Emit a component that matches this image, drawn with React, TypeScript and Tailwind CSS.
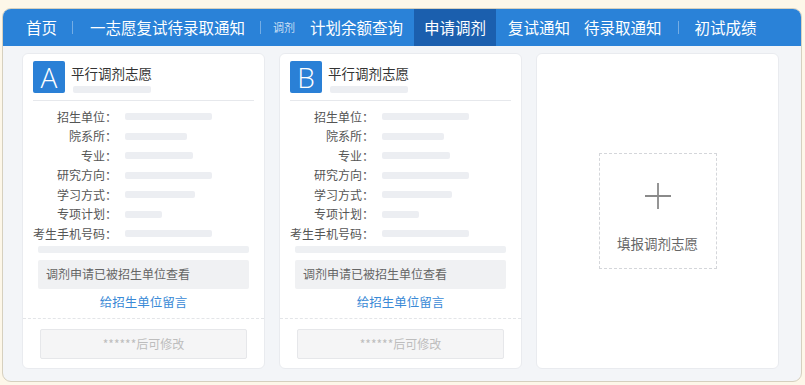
import React from "react";

const font = { fontFamily: '"Noto Sans CJK SC", "Noto Sans", sans-serif' };

function Sep() {
  return <div className="w-px h-[13px] bg-white/35" />;
}

function Bar({ w }: { w: number }) {
  return <div className="h-[7px] rounded-[2px] bg-[#eceef2]" style={{ width: w }} />;
}

const rows: [string, number][] = [
  ["招生单位：", 87],
  ["院系所：", 62],
  ["专业：", 68],
  ["研究方向：", 87],
  ["学习方式：", 70],
  ["专项计划：", 37],
  ["考生手机号码：", 87],
];

function WishCard({ letter }: { letter: string }) {
  return (
    <div className="w-[243px] rounded-[6px] bg-white border border-[#e9ebef] flex flex-col">
      <div className="px-[10px] pt-[7px]">
        <div className="flex">
          <div className="w-[32px] h-[32px] bg-[#2a80d6] rounded-[2px] flex items-center justify-center text-white text-[28px] leading-none font-light" style={{ fontFamily: '"Open Sans", "Noto Sans", sans-serif' }}>
            {letter}
          </div>
          <div className="ml-[6px] pt-[2px] flex flex-col">
            <div className="text-[13.5px] leading-[20px] text-[#333]">平行调剂志愿</div>
            <div className="mt-[3px] ml-[2px]">
              <Bar w={78} />
            </div>
          </div>
        </div>
        <div className="mt-[7px] h-px bg-[#e6e8ec]" />
        <div className="mt-[6px] flex flex-col">
          {rows.map(([label, w]) => (
            <div key={label} className="flex items-center h-[19.5px]">
              <div className="w-[84px] text-right text-[12px] text-[#555] leading-none whitespace-nowrap">{label}</div>
              <div className="ml-[8px]">
                <Bar w={w} />
              </div>
            </div>
          ))}
        </div>
      </div>
      <div className="mx-[15px] mt-[2px] h-[7px] rounded-[2px] bg-[#eef0f3]" />
      <div className="mx-[15px] mt-[7px] h-[29px] rounded-[2px] bg-[#f0f1f3] flex items-center pl-[8px] text-[12px] text-[#666]">
        调剂申请已被招生单位查看
      </div>
      <div className="mt-[4px] h-[20px] flex items-center justify-center text-[12.5px] text-[#3a8ad6]">给招生单位留言</div>
      <div className="mt-[5px] border-t border-dashed border-[#e3e5e8]" />
      <div className="mx-[17px] mt-[10px] h-[30px] rounded-[2px] bg-[#f5f5f6] border border-[#e6e7ea] flex items-center justify-center text-[12px] text-[#bdbdbd]">
        ******后可修改
      </div>
      <div className="h-[9px]" />
    </div>
  );
}

export default function App() {
  return (
    <div className="w-[805px] h-[385px] bg-[#fdf7e9] pt-[8px] px-[2px]" style={font}>
      <div className="w-[800px] h-[374px] rounded-[9px] border border-[#d6d0bf] overflow-hidden bg-[#f3f5f8] flex flex-col">
        <div className="h-[37px] bg-[#2a82d8] flex items-center text-white text-[15.5px] pl-[23px] shrink-0">
          <span>首页</span>
          <div className="ml-[15px] mr-[17px]"><Sep /></div>
          <span>一志愿复试待录取通知</span>
          <div className="mx-[15px]"><Sep /></div>
          <span className="text-[11px] text-white/75 mr-[15px] ml-[-3px]">调剂</span>
          <span>计划余额查询</span>
          <div className="ml-[11px] h-full px-[10px] bg-[#1b5fae] flex items-center">申请调剂</div>
          <span className="ml-[12px]">复试通知</span>
          <span className="ml-[14px]">待录取通知</span>
          <div className="mx-[16px]"><Sep /></div>
          <span>初试成绩</span>
        </div>
        <div className="flex gap-[14px] pl-[19px] pt-[7px]">
          <WishCard letter="A" />
          <WishCard letter="B" />
          <div className="w-[243px] rounded-[6px] bg-white border border-[#e9ebef] flex items-center justify-center">
            <div className="w-[118px] h-[116px] border border-dashed border-[#d4d6da] flex flex-col items-center">
              <svg className="mt-[29px]" width="26" height="26" viewBox="0 0 26 26">
                <path d="M13 0V26M0 13H26" stroke="#8a8a8a" strokeWidth="1.8" />
              </svg>
              <div className="mt-[28px] text-[13.5px] text-[#666] leading-none">填报调剂志愿</div>
            </div>
          </div>
        </div>
      </div>
    </div>
  );
}
